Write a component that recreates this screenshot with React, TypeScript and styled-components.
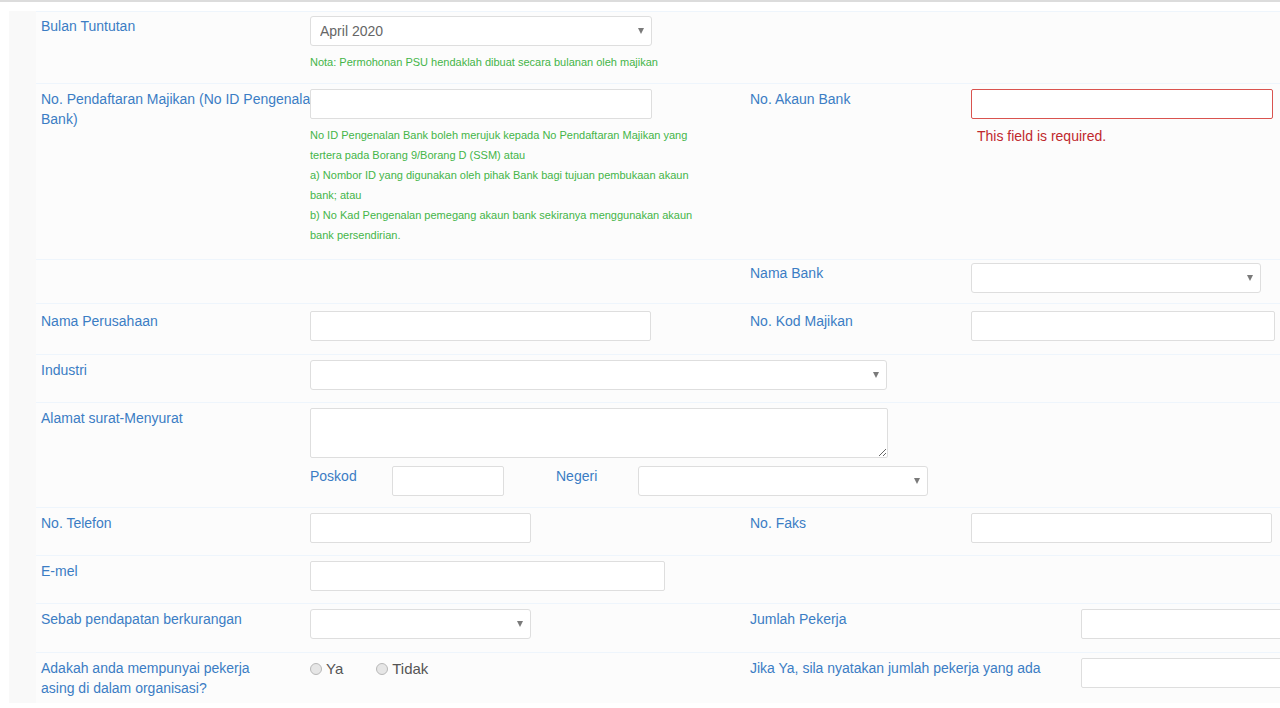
import styled, { createGlobalStyle } from "styled-components";

const GlobalStyle = createGlobalStyle`
  * {
    box-sizing: border-box;
  }
  body {
    margin: 0;
    background: #fff;
    font-family: "Liberation Sans", Arial, sans-serif;
    overflow: hidden;
  }
`;

const App = () => {
  return (
    <Page>
      <GlobalStyle />
      <Panel>
        <Row $pt={4} $pb={11}>
          <LabelCell>
            <Label>Bulan Tuntutan</Label>
          </LabelCell>
          <FieldCell>
            <SelectBox w={342} value="April 2020" />
            <Note>Nota: Permohonan PSU hendaklah dibuat secara bulanan oleh majikan</Note>
          </FieldCell>
        </Row>

        <Row $pb={14}>
          <LabelCell>
            <Label $w={292}>No. Pendaftaran Majikan (No ID Pengenalan Bank)</Label>
          </LabelCell>
          <FieldCell>
            <Input $w={342} />
            <Help>
              No ID Pengenalan Bank boleh merujuk kepada No Pendaftaran Majikan yang tertera pada
              Borang 9/Borang D (SSM) atau
              <br />
              a) Nombor ID yang digunakan oleh pihak Bank bagi tujuan pembukaan akaun bank; atau
              <br />
              b) No Kad Pengenalan pemegang akaun bank sekiranya menggunakan akaun bank
              persendirian.
            </Help>
          </FieldCell>
          <SideLabelCell>
            <Label>No. Akaun Bank</Label>
          </SideLabelCell>
          <SideField>
            <Input $w={302} $error />
            <ErrorText>This field is required.</ErrorText>
          </SideField>
        </Row>

        <Row $pt={3} $pb={10}>
          <LabelCell />
          <FieldCell />
          <SideLabelCell>
            <Label>Nama Bank</Label>
          </SideLabelCell>
          <SideField>
            <SelectBox w={290} />
          </SideField>
        </Row>

        <Row $pt={7} $pb={13}>
          <LabelCell>
            <Label>Nama Perusahaan</Label>
          </LabelCell>
          <FieldCell>
            <Input $w={341} />
          </FieldCell>
          <SideLabelCell>
            <Label>No. Kod Majikan</Label>
          </SideLabelCell>
          <SideField>
            <Input $w={304} />
          </SideField>
        </Row>

        <Row>
          <LabelCell>
            <Label>Industri</Label>
          </LabelCell>
          <FieldCell>
            <SelectBox w={577} />
          </FieldCell>
        </Row>

        <Row $pb={11}>
          <LabelCell>
            <Label>Alamat surat-Menyurat</Label>
          </LabelCell>
          <FieldCell>
            <TextArea />
            <AddressLine>
              <SubLabel>Poskod</SubLabel>
              <Input $w={112} />
              <SubLabel $gap={52}>Negeri</SubLabel>
              <SelectBox w={290} />
            </AddressLine>
          </FieldCell>
        </Row>

        <Row>
          <LabelCell>
            <Label>No. Telefon</Label>
          </LabelCell>
          <FieldCell>
            <Input $w={221} />
          </FieldCell>
          <SideLabelCell>
            <Label>No. Faks</Label>
          </SideLabelCell>
          <SideField>
            <Input $w={301} />
          </SideField>
        </Row>

        <Row>
          <LabelCell>
            <Label>E-mel</Label>
          </LabelCell>
          <FieldCell>
            <Input $w={355} />
          </FieldCell>
        </Row>

        <Row $pb={13}>
          <LabelCell>
            <Label>Sebab pendapatan berkurangan</Label>
          </LabelCell>
          <FieldCell>
            <SelectBox w={221} />
          </FieldCell>
          <SideLabelCell $w={336}>
            <Label>Jumlah Pekerja</Label>
          </SideLabelCell>
          <SideField>
            <Input $w={300} />
          </SideField>
        </Row>

        <Row $pb={5}>
          <LabelCell>
            <Label $w={230}>Adakah anda mempunyai pekerja asing di dalam organisasi?</Label>
          </LabelCell>
          <FieldCell>
            <RadioGroup>
              <RadioOption>
                <Radio type="radio" name="asing" />
                Ya
              </RadioOption>
              <RadioOption>
                <Radio type="radio" name="asing" />
                Tidak
              </RadioOption>
            </RadioGroup>
          </FieldCell>
          <SideLabelCell $w={336}>
            <Label $w={320}>Jika Ya, sila nyatakan jumlah pekerja yang ada</Label>
          </SideLabelCell>
          <SideField>
            <Input $w={300} />
          </SideField>
        </Row>
      </Panel>
    </Page>
  );
};

const SelectBox = ({ w, value }: { w: number; value?: string }) => (
  <SelectWrap $w={w}>
    <NativeSelect defaultValue={value ?? ""}>
      <option value={value ?? ""}>{value ?? ""}</option>
    </NativeSelect>
    <Caret />
  </SelectWrap>
);

const Page = styled.div`
  border-top: 2px solid #dcdcdc;
  padding-top: 9px;
`;

const Panel = styled.div`
  margin-left: 9px;
  padding-left: 27px;
  background: #f9f9f9;
`;

const Row = styled.div<{ $pt?: number; $pb?: number }>`
  display: flex;
  align-items: flex-start;
  background: #fcfcfc;
  border-top: 1px solid #eef5fc;
  padding-top: ${(p) => p.$pt ?? 5}px;
  padding-bottom: ${(p) => p.$pb ?? 12}px;
`;

const LabelCell = styled.div`
  flex: none;
  width: 274px;
  padding-left: 5px;
`;

const Label = styled.div<{ $w?: number }>`
  width: ${(p) => p.$w ?? 264}px;
  color: #3b7dc4;
  font-size: 14px;
  line-height: 20px;
`;

const FieldCell = styled.div`
  flex: none;
  width: 435px;
  position: relative;
`;

const SideLabelCell = styled.div<{ $w?: number }>`
  flex: none;
  width: ${(p) => p.$w ?? 226}px;
  padding-left: 5px;
`;

const SideField = styled.div`
  flex: 1;
  min-width: 0;
`;

const Input = styled.input<{ $w: number; $error?: boolean }>`
  display: block;
  flex: none;
  width: ${(p) => p.$w}px;
  height: 30px;
  margin: 0;
  background: #fff;
  border: 1px solid ${(p) => (p.$error ? "#d9534f" : "#dedede")};
  border-radius: 2px;
  outline: none;
`;

const TextArea = styled.textarea`
  display: block;
  width: 578px;
  height: 50px;
  margin: 0;
  background: #fff;
  border: 1px solid #dedede;
  border-radius: 2px;
  resize: both;
  outline: none;
`;

const SelectWrap = styled.div<{ $w: number }>`
  position: relative;
  flex: none;
  width: ${(p) => p.$w}px;
  height: 30px;
`;

const NativeSelect = styled.select`
  appearance: none;
  width: 100%;
  height: 100%;
  margin: 0;
  padding: 0 9px;
  background: #fff;
  border: 1px solid #dedede;
  border-radius: 3px;
  color: #666;
  font-family: "Liberation Sans", Arial, sans-serif;
  font-size: 14px;
  outline: none;
`;

const Caret = styled.span`
  position: absolute;
  right: 8px;
  top: 12px;
  width: 0;
  height: 0;
  border-left: 3px solid transparent;
  border-right: 3px solid transparent;
  border-top: 6px solid #7a7a7a;
  pointer-events: none;
`;

const Note = styled.div`
  margin-top: 6px;
  color: #44b548;
  font-size: 11px;
  line-height: 20px;
`;

const Help = styled(Note)`
  width: 398px;
`;

const ErrorText = styled.div`
  margin-top: 7px;
  padding-left: 6px;
  color: #c0282d;
  font-size: 14px;
  line-height: 20px;
`;

const AddressLine = styled.div`
  display: flex;
  align-items: flex-start;
  margin-top: 8px;
`;

const SubLabel = styled.div<{ $gap?: number }>`
  flex: none;
  width: 82px;
  margin-left: ${(p) => p.$gap ?? 0}px;
  color: #3b7dc4;
  font-size: 14px;
  line-height: 20px;
`;

const RadioGroup = styled.div`
  display: flex;
  align-items: center;
  height: 22px;
`;

const RadioOption = styled.label`
  display: flex;
  align-items: center;
  margin-right: 33px;
  color: #555;
  font-size: 15px;
  line-height: 22px;
`;

const Radio = styled.input`
  appearance: none;
  width: 12px;
  height: 12px;
  margin: 0 4px 0 0;
  border: 1px solid #b8b8b8;
  border-radius: 50%;
  background: #e6e6e6;
`;

export default App;
